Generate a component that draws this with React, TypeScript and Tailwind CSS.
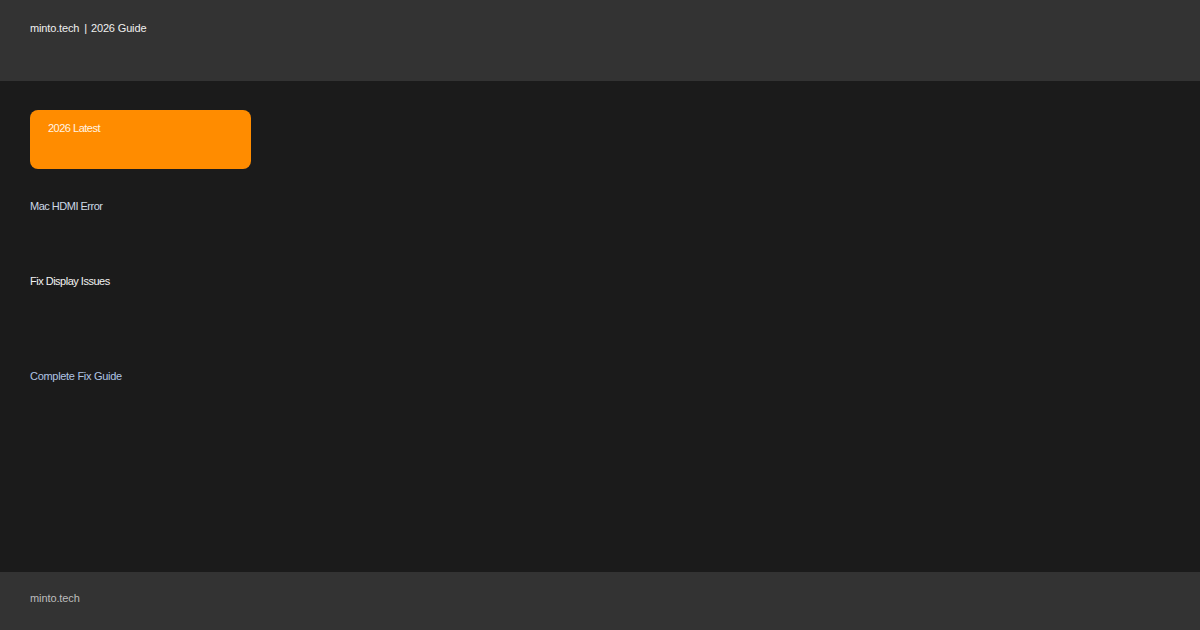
export default function App() {
  return (
    <div className="flex h-[630px] w-[1200px] flex-col bg-[#1b1b1b] font-['Liberation_Sans',Arial,sans-serif] text-[11px] leading-[14px] tracking-[-0.5px]">
      <header className="flex h-[81px] shrink-0 items-start bg-[#333333] px-[30px] pt-[21px] tracking-[-0.15px] text-[#f0f0f0]">
        <span>minto.tech</span>
        <span className="ml-[5px] mr-[4px]">|</span>
        <span>2026 Guide</span>
      </header>

      <main className="flex-1 px-[30px]">
        <div className="mt-[29px] h-[59px] w-[221px] rounded-[8px] bg-[#ff8c00] pl-[18px] pt-[11px] text-[#fff4e6]">
          2026 Latest
        </div>
        <p className="mt-[30px] text-[#cdd9e6]">Mac HDMI Error</p>
        <p className="mt-[61px] text-[#f2f2f2]">Fix Display Issues</p>
        <p className="mt-[81px] tracking-[-0.3px] text-[#b0c4e4]">Complete Fix Guide</p>
      </main>

      <footer className="h-[58px] shrink-0 bg-[#333333] px-[30px] pt-[19px] tracking-[-0.1px] text-[#bdbdbd]">
        minto.tech
      </footer>
    </div>
  );
}
